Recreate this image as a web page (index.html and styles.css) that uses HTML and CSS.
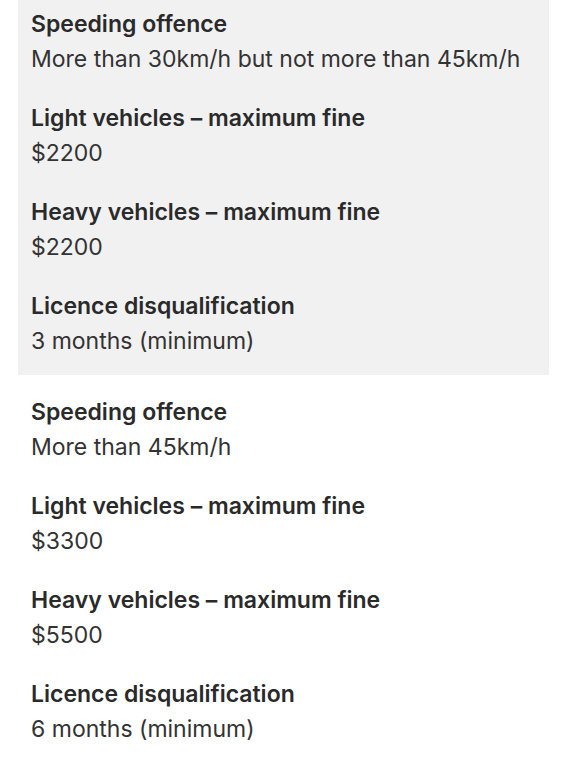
FILE: index.html
```html
<!DOCTYPE html>
<html lang="en">
<head>
<meta charset="utf-8">
<title>Speeding penalties</title>
<link rel="stylesheet" href="styles.css">
</head>
<body>
<div class="page">
  <dl class="penalty penalty--shaded">
    <div class="row"><dt>Speeding offence</dt><dd>More than 30km/h but not more than 45km/h</dd></div>
    <div class="row"><dt>Light vehicles – maximum fine</dt><dd>$2200</dd></div>
    <div class="row"><dt>Heavy vehicles – maximum fine</dt><dd>$2200</dd></div>
    <div class="row"><dt>Licence disqualification</dt><dd>3 months (minimum)</dd></div>
  </dl>
  <dl class="penalty">
    <div class="row"><dt>Speeding offence</dt><dd>More than 45km/h</dd></div>
    <div class="row"><dt>Light vehicles – maximum fine</dt><dd>$3300</dd></div>
    <div class="row"><dt>Heavy vehicles – maximum fine</dt><dd>$5500</dd></div>
    <div class="row"><dt>Licence disqualification</dt><dd>6 months (minimum)</dd></div>
  </dl>
</div>
</body>
</html>
```
FILE: styles.css
```css
html, body {
  margin: 0;
  padding: 0;
  background: #ffffff;
}
body {
  font-family: Inter, "Open Sans", sans-serif;
  color: #2f2f2f;
}
.page {
  width: 531px;
  margin-left: 18px;
}
.penalty {
  margin: 0;
  padding: 9px 13px 19px;
  display: flex;
  flex-direction: column;
  gap: 29px;
}
.penalty--shaded {
  background: #f1f1f1;
}
.penalty + .penalty {
  padding-top: 22px;
}
.row {
  display: flex;
  flex-direction: column;
  gap: 5px;
}
dt {
  font-size: 23px;
  line-height: 30px;
  font-weight: 600;
  color: #2a2a2a;
}
dd {
  margin: 0;
  font-size: 23px;
  line-height: 30px;
  color: #333333;
}
```
